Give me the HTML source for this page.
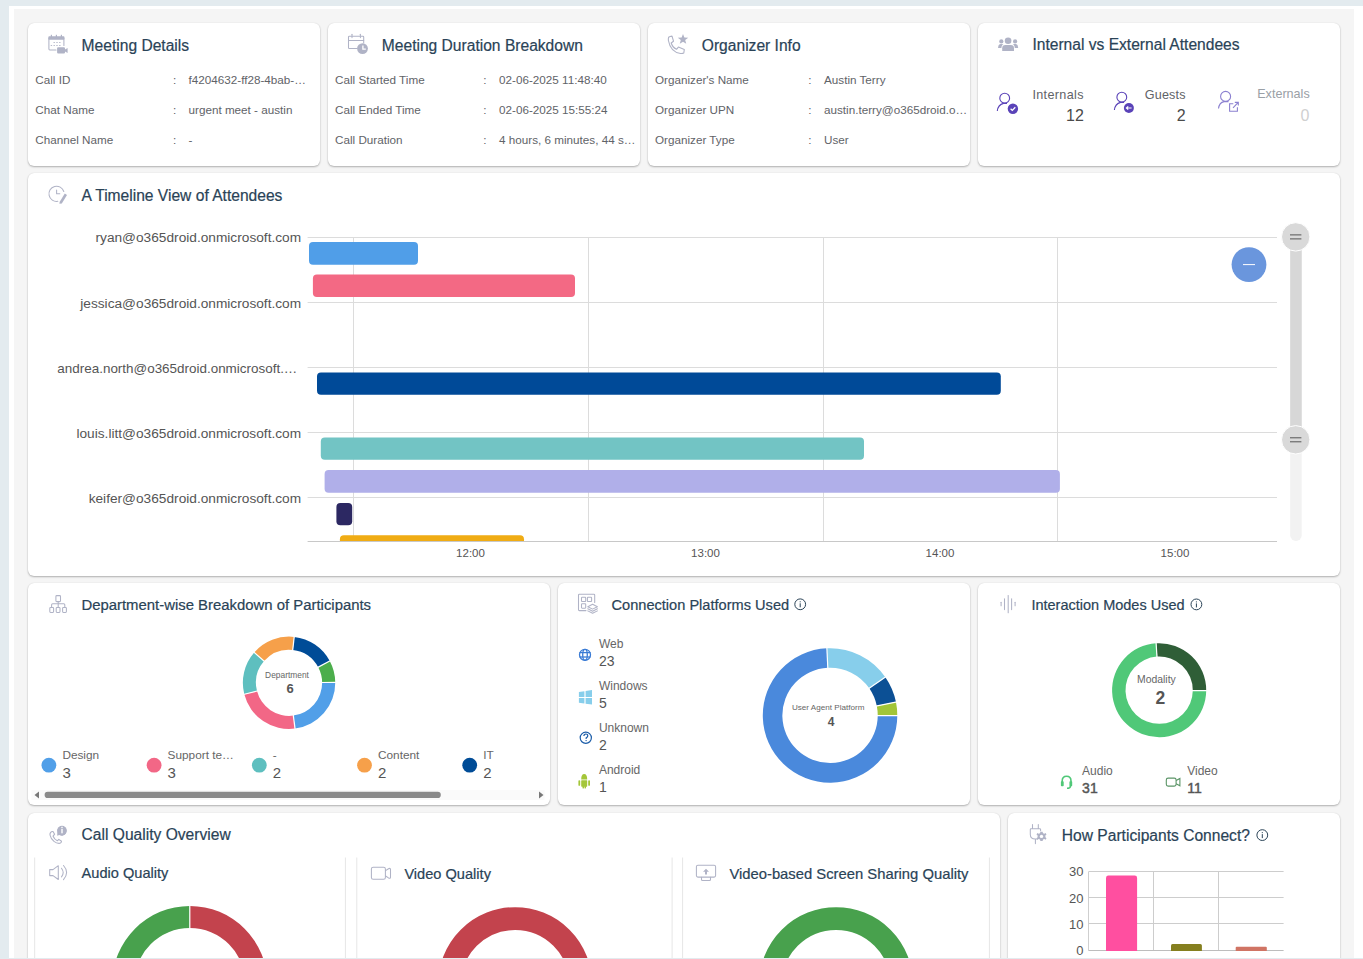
<!DOCTYPE html>
<html><head><meta charset="utf-8">
<style>
*{box-sizing:border-box;margin:0;padding:0}
html,body{width:1363px;height:959px;overflow:hidden;background:#e3ebef;font-family:"Liberation Sans",sans-serif}
#wrap{position:absolute;left:9px;top:6px;width:1354px;height:952px;background:#fff;overflow:hidden}
#gray{position:absolute;left:5px;top:3px;width:1340px;height:960px;background:#f5f5f5}
#clip{position:absolute;left:0;top:0;width:1363px;height:958px;overflow:hidden}
.card{position:absolute;background:#fff;border-radius:6px;box-shadow:0 1px 2px rgba(0,0,0,.28),0 0 1px rgba(0,0,0,.12)}
.a{position:absolute;white-space:nowrap;line-height:1}
.ic{position:absolute}
</style></head><body>
<div id="wrap"><div id="gray"></div></div>
<div id="clip">
<div class="card" style="left:27.5px;top:22.5px;width:292.5px;height:143.0px"></div>
<div class="card" style="left:327.5px;top:22.5px;width:312.5px;height:143.0px"></div>
<div class="card" style="left:647.5px;top:22.5px;width:322.5px;height:143.0px"></div>
<div class="card" style="left:977.5px;top:22.5px;width:362.5px;height:143.0px"></div>
<div class="card" style="left:27.5px;top:173px;width:1312.5px;height:402.5px"></div>
<div class="card" style="left:27.5px;top:583px;width:522.5px;height:222.20000000000005px"></div>
<div class="card" style="left:557.5px;top:583px;width:412.5px;height:222.20000000000005px"></div>
<div class="card" style="left:977.5px;top:583px;width:362.5px;height:222.20000000000005px"></div>
<div class="card" style="left:27.5px;top:812.5px;width:972.5px;height:199.5px"></div>
<div class="card" style="left:1007.5px;top:812.5px;width:332.5px;height:199.5px"></div>
<div class="a" style="top:37.69px;font-size:15.6px;color:#2a4357;left:81.60px;-webkit-text-stroke:0.2px #2a4357;">Meeting Details</div>
<div class="a" style="top:37.69px;font-size:15.6px;color:#2a4357;left:381.80px;-webkit-text-stroke:0.2px #2a4357;">Meeting Duration Breakdown</div>
<div class="a" style="top:37.69px;font-size:15.6px;color:#2a4357;left:701.80px;-webkit-text-stroke:0.2px #2a4357;">Organizer Info</div>
<div class="a" style="top:36.69px;font-size:15.6px;color:#2a4357;left:1032.40px;-webkit-text-stroke:0.2px #2a4357;">Internal vs External Attendees</div>
<div class="a" style="top:73.90px;font-size:11.7px;color:#5f6368;left:35.30px;">Call ID</div>
<div class="a" style="top:73.90px;font-size:11.7px;color:#5f6368;left:173.00px;">:</div>
<div class="a" style="top:73.90px;font-size:11.7px;color:#5f6368;left:188.50px;">f4204632-ff28-4bab-&#8230;</div>
<div class="a" style="top:103.90px;font-size:11.7px;color:#5f6368;left:35.30px;">Chat Name</div>
<div class="a" style="top:103.90px;font-size:11.7px;color:#5f6368;left:173.00px;">:</div>
<div class="a" style="top:103.90px;font-size:11.7px;color:#5f6368;left:188.50px;">urgent meet - austin</div>
<div class="a" style="top:133.90px;font-size:11.7px;color:#5f6368;left:35.30px;">Channel Name</div>
<div class="a" style="top:133.90px;font-size:11.7px;color:#5f6368;left:173.00px;">:</div>
<div class="a" style="top:133.90px;font-size:11.7px;color:#5f6368;left:188.50px;">-</div>
<div class="a" style="top:73.90px;font-size:11.7px;color:#5f6368;left:335.00px;">Call Started Time</div>
<div class="a" style="top:73.90px;font-size:11.7px;color:#5f6368;left:483.30px;">:</div>
<div class="a" style="top:73.90px;font-size:11.7px;color:#5f6368;left:499.00px;">02-06-2025 11:48:40</div>
<div class="a" style="top:103.90px;font-size:11.7px;color:#5f6368;left:335.00px;">Call Ended Time</div>
<div class="a" style="top:103.90px;font-size:11.7px;color:#5f6368;left:483.30px;">:</div>
<div class="a" style="top:103.90px;font-size:11.7px;color:#5f6368;left:499.00px;">02-06-2025 15:55:24</div>
<div class="a" style="top:133.90px;font-size:11.7px;color:#5f6368;left:335.00px;">Call Duration</div>
<div class="a" style="top:133.90px;font-size:11.7px;color:#5f6368;left:483.30px;">:</div>
<div class="a" style="top:133.90px;font-size:11.7px;color:#5f6368;left:499.00px;">4 hours, 6 minutes, 44 s&#8230;</div>
<div class="a" style="top:73.90px;font-size:11.7px;color:#5f6368;left:655.00px;">Organizer's Name</div>
<div class="a" style="top:73.90px;font-size:11.7px;color:#5f6368;left:808.30px;">:</div>
<div class="a" style="top:73.90px;font-size:11.7px;color:#5f6368;left:824.00px;">Austin Terry</div>
<div class="a" style="top:103.90px;font-size:11.7px;color:#5f6368;left:655.00px;">Organizer UPN</div>
<div class="a" style="top:103.90px;font-size:11.7px;color:#5f6368;left:808.30px;">:</div>
<div class="a" style="top:103.90px;font-size:11.7px;color:#5f6368;left:824.00px;">austin.terry@o365droid.o&#8230;</div>
<div class="a" style="top:133.90px;font-size:11.7px;color:#5f6368;left:655.00px;">Organizer Type</div>
<div class="a" style="top:133.90px;font-size:11.7px;color:#5f6368;left:808.30px;">:</div>
<div class="a" style="top:133.90px;font-size:11.7px;color:#5f6368;left:824.00px;">User</div>
<div class="a" style="top:89.13px;font-size:12.6px;color:#5f6368;letter-spacing:0.35px;left:1032.40px;">Internals</div>
<div class="a" style="top:108.26px;font-size:16px;color:#4a4a4a;left:483.90px;width:600px;text-align:right;">12</div>
<div class="a" style="top:88.63px;font-size:12.6px;color:#5f6368;letter-spacing:0.15px;left:1144.80px;">Guests</div>
<div class="a" style="top:107.76px;font-size:16px;color:#4a4a4a;left:585.60px;width:600px;text-align:right;">2</div>
<div class="a" style="top:87.93px;font-size:12.6px;color:#9aa0a6;left:1257.20px;">Externals</div>
<div class="a" style="top:108.26px;font-size:16px;color:#d0d0d0;left:709.50px;width:600px;text-align:right;">0</div>
<div class="a" style="top:188.29px;font-size:15.6px;color:#2a4357;left:81.60px;-webkit-text-stroke:0.2px #2a4357;">A Timeline View of Attendees</div>
<div class="a" style="top:231.10px;font-size:13.7px;color:#555;left:-298.90px;width:600px;text-align:right;">ryan@o365droid.onmicrosoft.com</div>
<div class="a" style="top:296.50px;font-size:13.7px;color:#555;left:-298.90px;width:600px;text-align:right;">jessica@o365droid.onmicrosoft.com</div>
<div class="a" style="top:362.21px;font-size:13.45px;color:#555;left:-302.70px;width:600px;text-align:right;">andrea.north@o365droid.onmicrosoft.&#8230;</div>
<div class="a" style="top:427.00px;font-size:13.7px;color:#555;left:-298.90px;width:600px;text-align:right;">louis.litt@o365droid.onmicrosoft.com</div>
<div class="a" style="top:492.20px;font-size:13.7px;color:#555;left:-298.90px;width:600px;text-align:right;">keifer@o365droid.onmicrosoft.com</div>
<svg class="ic" style="left:0;top:0" width="1363" height="959"><line x1="307.6" y1="237.5" x2="1277" y2="237.5" stroke="#dcdcdc" stroke-width="1"/><line x1="307.6" y1="302.5" x2="1277" y2="302.5" stroke="#dcdcdc" stroke-width="1"/><line x1="307.6" y1="367.5" x2="1277" y2="367.5" stroke="#dcdcdc" stroke-width="1"/><line x1="307.6" y1="432.5" x2="1277" y2="432.5" stroke="#dcdcdc" stroke-width="1"/><line x1="307.6" y1="497.5" x2="1277" y2="497.5" stroke="#dcdcdc" stroke-width="1"/><line x1="307.6" y1="541.5" x2="1277" y2="541.5" stroke="#c8c8c8" stroke-width="1"/><line x1="353.5" y1="237" x2="353.5" y2="541" stroke="#dcdcdc" stroke-width="1"/><line x1="588.5" y1="237" x2="588.5" y2="541" stroke="#dcdcdc" stroke-width="1"/><line x1="823.5" y1="237" x2="823.5" y2="541" stroke="#dcdcdc" stroke-width="1"/><line x1="1057.5" y1="237" x2="1057.5" y2="541" stroke="#dcdcdc" stroke-width="1"/><defs><clipPath id="tlc"><rect x="300" y="200" width="990" height="341"/></clipPath></defs><g clip-path="url(#tlc)"><rect x="309" y="241.9" width="109" height="22.900000000000006" rx="4" fill="#509ee8"/><rect x="312.9" y="274.5" width="262.1" height="22.600000000000023" rx="4" fill="#f36984"/><rect x="317" y="372.5" width="683.8" height="22.30000000000001" rx="4" fill="#004a98"/><rect x="320.8" y="437.5" width="543.2" height="22.30000000000001" rx="4" fill="#72c4c4"/><rect x="324.6" y="470.1" width="735.3000000000001" height="22.599999999999966" rx="4" fill="#b0afe9"/><rect x="336.4" y="503" width="15.800000000000011" height="22.299999999999955" rx="4" fill="#2c2862"/><rect x="339.9" y="535.3" width="184.10000000000002" height="22.700000000000045" rx="4" fill="#f0ac14"/></g><rect x="1290.2" y="237.6" width="11.5" height="303.3" rx="5.75" fill="#f2f2f2"/><rect x="1290.2" y="237.6" width="11.5" height="202.2" fill="#d7d7d7"/><circle cx="1295.7" cy="236.9" r="14.2" fill="#d9d9d9" stroke="#fff" stroke-width="1"/><line x1="1290" y1="234.9" x2="1301.4" y2="234.9" stroke="#555" stroke-width="1"/><line x1="1290" y1="238.9" x2="1301.4" y2="238.9" stroke="#555" stroke-width="1"/><circle cx="1295.7" cy="439.8" r="14.2" fill="#d9d9d9" stroke="#fff" stroke-width="1"/><line x1="1290" y1="437.8" x2="1301.4" y2="437.8" stroke="#555" stroke-width="1"/><line x1="1290" y1="441.8" x2="1301.4" y2="441.8" stroke="#555" stroke-width="1"/><circle cx="1249" cy="264.6" r="17.4" fill="#6a96dd"/><line x1="1243" y1="264.6" x2="1255" y2="264.6" stroke="#fff" stroke-width="1"/></svg>
<div class="a" style="top:547.77px;font-size:11.5px;color:#555;left:170.50px;width:600px;text-align:center;">12:00</div>
<div class="a" style="top:547.77px;font-size:11.5px;color:#555;left:405.50px;width:600px;text-align:center;">13:00</div>
<div class="a" style="top:547.77px;font-size:11.5px;color:#555;left:640.00px;width:600px;text-align:center;">14:00</div>
<div class="a" style="top:547.77px;font-size:11.5px;color:#555;left:875.00px;width:600px;text-align:center;">15:00</div>
<div class="a" style="top:598.09px;font-size:14.9px;color:#2a4357;left:81.40px;-webkit-text-stroke:0.2px #2a4357;">Department-wise Breakdown of Participants</div>
<div class="a" style="top:597.94px;font-size:14.6px;color:#2a4357;left:611.50px;-webkit-text-stroke:0.2px #2a4357;">Connection Platforms Used</div>
<div class="a" style="top:597.93px;font-size:14.5px;color:#2a4357;left:1031.40px;-webkit-text-stroke:0.2px #2a4357;">Interaction Modes Used</div>
<div class="a" style="top:671.09px;font-size:8.4px;color:#666;left:-13.00px;width:600px;text-align:center;">Department</div>
<div class="a" style="top:681.90px;font-size:13px;color:#555;font-weight:700;left:-10.00px;width:600px;text-align:center;">6</div>
<div class="a" style="top:750.41px;font-size:11.8px;color:#666;left:62.40px;">Design</div>
<div class="a" style="top:765.20px;font-size:15px;color:#555;left:62.40px;">3</div>
<div class="a" style="top:750.41px;font-size:11.8px;color:#666;left:167.60px;">Support te&#8230;</div>
<div class="a" style="top:765.20px;font-size:15px;color:#555;left:167.60px;">3</div>
<div class="a" style="top:750.41px;font-size:11.8px;color:#666;left:272.80px;">-</div>
<div class="a" style="top:765.20px;font-size:15px;color:#555;left:272.80px;">2</div>
<div class="a" style="top:750.41px;font-size:11.8px;color:#666;left:378.00px;">Content</div>
<div class="a" style="top:765.20px;font-size:15px;color:#555;left:378.00px;">2</div>
<div class="a" style="top:750.41px;font-size:11.8px;color:#666;left:483.20px;">IT</div>
<div class="a" style="top:765.20px;font-size:15px;color:#555;left:483.20px;">2</div>
<div class="a" style="top:704.34px;font-size:8.1px;color:#666;left:528.20px;width:600px;text-align:center;">User Agent Platform</div>
<div class="a" style="top:715.84px;font-size:12px;color:#555;font-weight:700;left:531.20px;width:600px;text-align:center;">4</div>
<div class="a" style="top:638.04px;font-size:12px;color:#666;left:598.90px;">Web</div>
<div class="a" style="top:654.05px;font-size:14px;color:#555;left:598.90px;">23</div>
<div class="a" style="top:680.04px;font-size:12px;color:#666;left:598.90px;">Windows</div>
<div class="a" style="top:696.05px;font-size:14px;color:#555;left:598.90px;">5</div>
<div class="a" style="top:722.04px;font-size:12px;color:#666;left:598.90px;">Unknown</div>
<div class="a" style="top:738.05px;font-size:14px;color:#555;left:598.90px;">2</div>
<div class="a" style="top:764.04px;font-size:12px;color:#666;left:598.90px;">Android</div>
<div class="a" style="top:780.05px;font-size:14px;color:#555;left:598.90px;">1</div>
<div class="a" style="top:674.95px;font-size:10.4px;color:#666;left:856.40px;width:600px;text-align:center;">Modality</div>
<div class="a" style="top:689.89px;font-size:17.5px;color:#555;font-weight:700;left:860.40px;width:600px;text-align:center;">2</div>
<div class="a" style="top:765.04px;font-size:12px;color:#666;left:1082.10px;">Audio</div>
<div class="a" style="top:780.95px;font-size:14px;color:#555;left:1082.10px;-webkit-text-stroke:0.45px #555;">31</div>
<div class="a" style="top:765.04px;font-size:12px;color:#666;left:1187.20px;">Video</div>
<div class="a" style="top:780.95px;font-size:14px;color:#555;left:1187.20px;-webkit-text-stroke:0.45px #555;">11</div>
<div class="a" style="top:827.39px;font-size:15.6px;color:#2a4357;left:81.60px;-webkit-text-stroke:0.2px #2a4357;">Call Quality Overview</div>
<div class="a" style="top:827.79px;font-size:15.6px;color:#2a4357;left:1061.80px;-webkit-text-stroke:0.2px #2a4357;">How Participants Connect?</div>
<div class="a" style="top:866.04px;font-size:14.6px;color:#2a4357;left:81.60px;-webkit-text-stroke:0.2px #2a4357;">Audio Quality</div>
<div class="a" style="top:867.14px;font-size:14.6px;color:#2a4357;left:404.40px;-webkit-text-stroke:0.2px #2a4357;">Video Quality</div>
<div class="a" style="top:867.27px;font-size:14.8px;color:#2a4357;left:729.40px;-webkit-text-stroke:0.2px #2a4357;">Video-based Screen Sharing Quality</div>
<div class="a" style="top:865.20px;font-size:13px;color:#555;left:483.40px;width:600px;text-align:right;">30</div>
<div class="a" style="top:891.80px;font-size:13px;color:#555;left:483.40px;width:600px;text-align:right;">20</div>
<div class="a" style="top:917.60px;font-size:13px;color:#555;left:483.40px;width:600px;text-align:right;">10</div>
<div class="a" style="top:943.70px;font-size:13px;color:#555;left:483.40px;width:600px;text-align:right;">0</div>
<svg class="ic" style="left:0;top:0" width="1363" height="959"><path d="M294.20,636.89 A46.2,46.2 0 0 1 329.76,660.96 L318.22,667.15 A33.1,33.1 0 0 0 292.74,649.91 Z" fill="#004c97"/><path d="M329.76,660.96 A46.2,46.2 0 0 1 335.25,682.38 L322.15,682.50 A33.1,33.1 0 0 0 318.22,667.15 Z" fill="#4cae4c"/><path d="M335.25,682.38 A46.2,46.2 0 0 1 295.04,728.61 L293.34,715.62 A33.1,33.1 0 0 0 322.15,682.50 Z" fill="#519fe8"/><path d="M295.04,728.61 A46.2,46.2 0 0 1 244.30,694.27 L256.99,691.01 A33.1,33.1 0 0 0 293.34,715.62 Z" fill="#f26786"/><path d="M244.30,694.27 A46.2,46.2 0 0 1 254.19,652.48 L264.07,661.08 A33.1,33.1 0 0 0 256.99,691.01 Z" fill="#5ebfbf"/><path d="M254.19,652.48 A46.2,46.2 0 0 1 294.20,636.89 L292.74,649.91 A33.1,33.1 0 0 0 264.07,661.08 Z" fill="#f6a04a"/><line x1="292.63" y1="650.90" x2="294.31" y2="635.89" stroke="#fff" stroke-width="1.2"/><line x1="317.34" y1="667.62" x2="330.64" y2="660.48" stroke="#fff" stroke-width="1.2"/><line x1="321.15" y1="682.51" x2="336.25" y2="682.37" stroke="#fff" stroke-width="1.2"/><line x1="293.21" y1="714.63" x2="295.17" y2="729.60" stroke="#fff" stroke-width="1.2"/><line x1="257.95" y1="690.77" x2="243.33" y2="694.51" stroke="#fff" stroke-width="1.2"/><line x1="264.83" y1="661.73" x2="253.44" y2="651.82" stroke="#fff" stroke-width="1.2"/><circle cx="48.90" cy="765.2" r="7.4" fill="#519fe8"/><circle cx="154.10" cy="765.2" r="7.4" fill="#f26786"/><circle cx="259.30" cy="765.2" r="7.4" fill="#5ebfbf"/><circle cx="364.50" cy="765.2" r="7.4" fill="#f6a04a"/><circle cx="469.70" cy="765.2" r="7.4" fill="#004c97"/><rect x="31.5" y="790" width="513" height="10" fill="#fafafa"/><rect x="44.6" y="791.8" width="396.2" height="6.2" rx="3.1" fill="#8a8a8a"/><path d="M34.5,795 L39,791.5 L39,798.5 Z" fill="#777"/><path d="M543.5,795 L539,791.5 L539,798.5 Z" fill="#777"/><path d="M826.88,648.22 A67.25,67.25 0 0 1 885.38,677.18 L869.30,688.29 A47.7,47.7 0 0 0 827.80,667.75 Z" fill="#87ceeb"/><path d="M885.38,677.18 A67.25,67.25 0 0 1 895.97,702.10 L876.81,705.96 A47.7,47.7 0 0 0 869.30,688.29 Z" fill="#0c5095"/><path d="M895.97,702.10 A67.25,67.25 0 0 1 897.30,715.64 L877.75,715.57 A47.7,47.7 0 0 0 876.81,705.96 Z" fill="#a2c538"/><path d="M897.30,715.64 A67.25,67.25 0 1 1 826.88,648.22 L827.80,667.75 A47.7,47.7 0 1 0 877.75,715.57 Z" fill="#4a89dc"/><line x1="827.85" y1="668.75" x2="826.83" y2="647.23" stroke="#fff" stroke-width="1.2"/><line x1="868.47" y1="688.86" x2="886.21" y2="676.61" stroke="#fff" stroke-width="1.2"/><line x1="875.83" y1="706.16" x2="896.95" y2="701.90" stroke="#fff" stroke-width="1.2"/><line x1="876.75" y1="715.57" x2="898.30" y2="715.64" stroke="#fff" stroke-width="1.2"/><g fill="none" stroke="#3a7bd5" stroke-width="1.3"><circle cx="585" cy="654.8" r="5.5"/><line x1="579.5" y1="652.6" x2="590.5" y2="652.6"/><line x1="579.5" y1="657" x2="590.5" y2="657"/><ellipse cx="585" cy="654.8" rx="2.3" ry="5.5"/></g><g fill="#87ceeb"><path d="M578.9,692 L584.4,691.2 L584.4,697 L578.9,697 Z"/><path d="M585.6,691 L592,690 L592,697 L585.6,697 Z"/><path d="M578.9,698 L584.4,698 L584.4,703.6 L578.9,702.8 Z"/><path d="M585.6,698 L592,698 L592,704.6 L585.6,703.7 Z"/></g><circle cx="585.8" cy="737.8" r="5.6" fill="none" stroke="#1a5ca8" stroke-width="1.2"/><path d="M583.9,736.1 Q583.9,734 585.9,734 Q587.8,734 587.8,735.8 Q587.8,737 586.3,737.7 L586.1,739" fill="none" stroke="#1a5ca8" stroke-width="1.2"/><circle cx="586.1" cy="740.6" r="0.7" fill="#1a5ca8"/><g fill="#a4c639"><path d="M581.2,779.5 Q581.2,774 584.2,774 Q587.2,774 587.2,779.5 Z"/><rect x="581.2" y="780.2" width="6" height="6.5" rx="0.6"/><rect x="578.4" y="780.2" width="1.8" height="5.6" rx="0.9"/><rect x="588.2" y="780.2" width="1.8" height="5.6" rx="0.9"/><rect x="582.5" y="786" width="1.5" height="2.4"/><rect x="584.5" y="786" width="1.5" height="2.4"/></g><path d="M1156.11,643.25 A47.05,47.05 0 0 1 1206.20,690.68 L1192.80,690.54 A33.65,33.65 0 0 0 1156.98,656.62 Z" fill="#2f5e37"/><path d="M1206.20,690.68 A47.05,47.05 0 1 1 1156.11,643.25 L1156.98,656.62 A33.65,33.65 0 1 0 1192.80,690.54 Z" fill="#50c878"/><line x1="1157.04" y1="657.62" x2="1156.05" y2="642.25" stroke="#fff" stroke-width="1.2"/><line x1="1191.80" y1="690.53" x2="1207.20" y2="690.69" stroke="#fff" stroke-width="1.2"/><g fill="none" stroke="#50c878" stroke-width="1.6"><path d="M1062.2,784 L1062.2,781 Q1062.2,776.3 1066.6,776.3 Q1071,776.3 1071,781 L1071,784"/><path d="M1070.5,786 Q1070.5,788.3 1067,788.3"/></g><g fill="#50c878"><rect x="1060.9" y="781.3" width="2.8" height="5" rx="0.8"/><rect x="1069.4" y="781.3" width="2.8" height="5" rx="0.8"/></g><g fill="none" stroke="#5a9466" stroke-width="1.1"><rect x="1166.3" y="778.1" width="9.8" height="8" rx="1.8"/><path d="M1176.1,780.5 L1179.9,778.5 L1179.9,785.8 L1176.1,783.7"/></g><line x1="34.7" y1="857.5" x2="34.7" y2="960" stroke="#e6e6e6" stroke-width="1"/><line x1="345.4" y1="857.5" x2="345.4" y2="960" stroke="#e6e6e6" stroke-width="1"/><line x1="356.8" y1="857.5" x2="356.8" y2="960" stroke="#e6e6e6" stroke-width="1"/><line x1="672.1" y1="857.5" x2="672.1" y2="960" stroke="#e6e6e6" stroke-width="1"/><line x1="682.6" y1="857.5" x2="682.6" y2="960" stroke="#e6e6e6" stroke-width="1"/><line x1="989.4" y1="857.5" x2="989.4" y2="960" stroke="#e6e6e6" stroke-width="1"/><path d="M189.80,905.90 A77.6,77.6 0 0 1 189.80,1061.10 L189.80,1038.90 A55.4,55.4 0 0 0 189.80,928.10 Z" fill="#c3434d"/><path d="M189.80,1061.10 A77.6,77.6 0 0 1 189.80,905.90 L189.80,928.10 A55.4,55.4 0 0 0 189.80,1038.90 Z" fill="#48a14d"/><line x1="189.80" y1="929.10" x2="189.80" y2="904.90" stroke="#fff" stroke-width="1.2"/><line x1="189.80" y1="1037.90" x2="189.80" y2="1062.10" stroke="#fff" stroke-width="1.2"/><circle cx="515.1" cy="984.1" r="65.5" fill="none" stroke="#c3434d" stroke-width="22.8"/><circle cx="836.1" cy="984.1" r="65.55" fill="none" stroke="#48a14d" stroke-width="22.7"/><line x1="1088.7" y1="871.5" x2="1283.6" y2="871.5" stroke="#cdcdcd" stroke-width="1"/><line x1="1088.7" y1="897.5" x2="1283.6" y2="897.5" stroke="#cdcdcd" stroke-width="1"/><line x1="1088.7" y1="923.5" x2="1283.6" y2="923.5" stroke="#cdcdcd" stroke-width="1"/><line x1="1153.5" y1="871.5" x2="1153.5" y2="950" stroke="#cdcdcd" stroke-width="1"/><line x1="1218.5" y1="871.5" x2="1218.5" y2="950" stroke="#cdcdcd" stroke-width="1"/><line x1="1088.5" y1="871.5" x2="1088.5" y2="950.5" stroke="#cfcfcf" stroke-width="1"/><line x1="1088.5" y1="950.5" x2="1283.6" y2="950.5" stroke="#bdbdbd" stroke-width="1"/><path d="M1106,951 L1106,878 Q1106,875.6 1108.4,875.6 L1134.7,875.6 Q1137.1,875.6 1137.1,878 L1137.1,951 Z" fill="#ff4fa0"/><path d="M1171,951 L1171,945.5 Q1171,944 1172.5,944 L1200.4,944 Q1201.9,944 1201.9,945.5 L1201.9,951 Z" fill="#857f1f"/><path d="M1235.7,951 L1235.7,947.7 Q1235.7,946.7 1236.7,946.7 L1265.8,946.7 Q1266.8,946.7 1266.8,947.7 L1266.8,951 Z" fill="#d07464"/><g fill="#b0b3c6"><rect x="48.4" y="36.3" width="16" height="3.4" rx="0.8"/><rect x="50.8" y="34.8" width="1.2" height="2.6"/><rect x="55.8" y="34.8" width="1.2" height="2.6"/><rect x="60.8" y="34.8" width="1.2" height="2.6"/><path d="M57.1,48.3 Q57.1,47.2 58.2,47.2 L63.9,47.2 Q65,47.2 65,48.3 L65,49.4 L67.6,47.9 L67.6,52.9 L65,51.4 L65,52.5 Q65,53.6 63.9,53.6 L58.2,53.6 Q57.1,53.6 57.1,52.5 Z"/><rect x="53.5" y="42.1" width="1.4" height="0.9"/><rect x="56.3" y="42.1" width="1.4" height="0.9"/><rect x="59.1" y="42.1" width="1.4" height="0.9"/><rect x="50.7" y="45" width="1.4" height="0.9"/><rect x="53.5" y="45" width="1.4" height="0.9"/><rect x="56.3" y="45" width="1.4" height="0.9"/><rect x="59.1" y="45" width="1.4" height="0.9"/></g><g fill="none" stroke="#b0b3c6" stroke-width="1.05" stroke-linecap="round" stroke-linejoin="round"><path d="M48.9,38 L48.9,49.1 Q48.9,50 49.8,50 L56,50"/><path d="M63.9,38 L63.9,45.5"/></g><g fill="none" stroke="#b0b3c6" stroke-width="1.05" stroke-linecap="round" stroke-linejoin="round"><path d="M357,48.5 L349.3,48.5 Q348.5,48.5 348.5,47.7 L348.5,37 Q348.5,36.2 349.3,36.2 L362.9,36.2 Q363.7,36.2 363.7,37 L363.7,43"/><line x1="348.5" y1="40.4" x2="363.7" y2="40.4"/><line x1="352" y1="34.2" x2="352" y2="37.6"/><line x1="360.4" y1="34.2" x2="360.4" y2="37.6"/></g><circle cx="362.5" cy="48.6" r="5.4" fill="#b0b3c6"/><path d="M362.9,45.4 L362.9,49.2 L365.8,49.2" fill="none" stroke="#fff" stroke-width="1.3"/><g fill="none" stroke="#b0b3c6" stroke-width="1.05" stroke-linecap="round" stroke-linejoin="round"><path d="M668.6,37.3 Q670,36.2 672,36.1 L673.5,41.2 L671.2,43 Q672.4,47.2 676.5,49.3 L678.4,47.1 L684.3,49.5 L683.8,53 Q682.4,53.7 680.5,53.5 Q670.5,52 668.4,40.5 Q668.2,38.5 668.6,37.3 Z" stroke-width="1.1"/></g><path d="M683.00,33.90 L684.35,37.54 L688.23,37.70 L685.19,40.11 L686.23,43.85 L683.00,41.70 L679.77,43.85 L680.81,40.11 L677.77,37.70 L681.65,37.54 Z" fill="#b0b3c6"/><g fill="#b0b3c6"><circle cx="1008.1" cy="40.8" r="3.3"/><path d="M1002.2,51 L1002.2,48.3 Q1002.2,45 1005.5,45 L1010.8,45 Q1014,45 1014,48.3 L1014,51 Z"/><circle cx="1001.3" cy="41.4" r="2.1"/><path d="M998,47.9 L998.5,45.5 Q999,44 1000.5,44 L1003.3,44 L1002.5,44.8 Q1001.4,46 1001.4,47.9 Z"/><circle cx="1015.1" cy="41.4" r="2.1"/><path d="M1018.2,47.9 L1017.7,45.5 Q1017.2,44 1015.7,44 L1012.9,44 L1013.7,44.8 Q1014.8,46 1014.8,47.9 Z"/></g><g fill="none" stroke="#5a43b8" stroke-width="1.1"><circle cx="1004.7" cy="98.2" r="4.9"/><path d="M997.3,111 Q998,104.8 1003.5,103.4 L1007,103.4"/></g><circle cx="1012.9" cy="108.7" r="5.2" fill="#5a43b8"/><path d="M1010.6,108.8 L1012.3,110.4 L1015.3,107.2" fill="none" stroke="#fff" stroke-width="1.3"/><g fill="none" stroke="#5a43b8" stroke-width="1.1"><circle cx="1121.8" cy="97.2" r="4.9"/><path d="M1114.4,110 Q1115.1,103.8 1120.6,102.4 L1124.1,102.4"/></g><circle cx="1128.9" cy="108" r="5" fill="#5a43b8"/><path d="M1131.6,108 L1126.6,108 M1128.2,106.4 L1126.4,108 L1128.2,109.6" fill="none" stroke="#fff" stroke-width="1.2"/><g fill="none" stroke="#8b80d0" stroke-width="1.1"><circle cx="1225.6" cy="96.4" r="5"/><path d="M1218.5,108.5 Q1219.3,102.5 1224,101.6 L1228.5,101.6"/><path d="M1233.3,103.8 L1229.6,103.8 L1229.6,111.3 L1237.4,111.3 L1237.4,107.2"/><path d="M1233,107.8 L1238,102.6 M1234.8,102.4 L1238.3,102.4 L1238.3,105.5"/></g><g fill="none" stroke="#b0b3c6" stroke-width="1.05" stroke-linecap="round" stroke-linejoin="round"><path d="M63.8,191.5 A7.6,7.6 0 1 0 57.8,201.3"/><path d="M56.6,190 L56.6,193.7 L59.8,193.7"/></g><path d="M59.6,202 L64.8,193.6 L67,195 L61.8,203.4 L59.4,203.8 Z" fill="#b0b3c6"/><g fill="none" stroke="#b0b3c6" stroke-width="1.05" stroke-linecap="round" stroke-linejoin="round"><rect x="55.9" y="595.6" width="4.6" height="6" rx="0.8"/><path d="M58.2,601.6 L58.2,607 M51.6,607 L51.6,604.8 Q51.6,603.8 52.6,603.8 L63.8,603.8 Q64.8,603.8 64.8,604.8 L64.8,607"/><rect x="49.8" y="607.4" width="3.8" height="5" rx="0.8"/><rect x="56.2" y="607.4" width="3.8" height="5" rx="0.8"/><rect x="62.6" y="607.4" width="3.8" height="5" rx="0.8"/></g><g fill="none" stroke="#b0b3c6" stroke-width="1.05" stroke-linecap="round" stroke-linejoin="round"><path d="M586,610.6 L579.4,610.6 Q578.5,610.6 578.5,609.7 L578.5,595 Q578.5,594.2 579.4,594.2 L593.8,594.2 Q594.7,594.2 594.7,595 L594.7,602.5"/><rect x="581.5" y="597.3" width="4.2" height="4.2" rx="0.6"/><rect x="587.4" y="597.3" width="4.2" height="4.2" rx="0.6"/><rect x="581.5" y="603.7" width="4.2" height="4.5" rx="0.6"/><path d="M592.6,604.3 L597.4,606.7 L592.6,609.1 L587.8,606.7 Z"/><path d="M587.8,608.8 L592.6,611.2 L597.4,608.8 M587.8,610.9 L592.6,613.3 L597.4,610.9"/></g><g fill="none" stroke="#b0b3c6" stroke-width="1.05" stroke-linecap="round" stroke-linejoin="round"><line x1="1001.1" y1="602.3" x2="1001.1" y2="605.7"/><line x1="1004.5" y1="598.8" x2="1004.5" y2="609.6"/><line x1="1008.2" y1="595.5" x2="1008.2" y2="612.8"/><line x1="1011.6" y1="598.8" x2="1011.6" y2="609.6"/><line x1="1015.1" y1="602.3" x2="1015.1" y2="605.7"/></g><g fill="none" stroke="#b0b3c6" stroke-width="1.05" stroke-linecap="round" stroke-linejoin="round"><path d="M50.5,832.6 Q51.5,831.3 53,831.5 L54.6,834.2 L53.1,836.2 Q54.5,839.5 57.3,840.8 L58.8,839.4 L61.5,841.2 Q61.5,842.7 60,843.3 Q57,843.8 54,841.4 Q50.7,838.6 50,835 Q49.8,833.6 50.5,832.6 Z" stroke-width="1.1"/></g><path d="M57.2,835.8 L57.4,829.4 A4.7,4.7 0 1 1 59.3,835 Z" fill="#b0b3c6"/><circle cx="62" cy="830.6" r="4.8" fill="#b0b3c6"/><rect x="61.3" y="828.8" width="1.4" height="4.5" fill="#fff"/><rect x="61.3" y="826.8" width="1.4" height="1.2" fill="#fff"/><g fill="none" stroke="#b0b3c6" stroke-width="1.05" stroke-linecap="round" stroke-linejoin="round"><path d="M1032.5,824.4 L1032.5,828.8 M1038.3,824.4 L1038.3,828.8 M1040.6,830.8 L1040.6,829.6 Q1040.6,828.8 1039.8,828.8 L1031,828.8 Q1030.3,828.8 1030.3,829.6 L1030.3,834.5 Q1030.3,838.8 1035.4,839 L1035.4,843.6 M1035.4,839 L1037.5,839"/></g><g transform="translate(1041.5,836.4)"><path d="M-1.1,-4.6 L1.1,-4.6 L1.5,-3.2 L2.9,-2.6 L4.1,-3.4 L5,-1.8 L3.9,-0.8 L3.9,0.8 L5,1.8 L4.1,3.4 L2.9,2.6 L1.5,3.2 L1.1,4.6 L-1.1,4.6 L-1.5,3.2 L-2.9,2.6 L-4.1,3.4 L-5,1.8 L-3.9,0.8 L-3.9,-0.8 L-5,-1.8 L-4.1,-3.4 L-2.9,-2.6 L-1.5,-3.2 Z" fill="#b0b3c6"/><circle r="1.7" fill="#fff"/></g><g fill="none" stroke="#b0b3c6" stroke-width="1.05" stroke-linecap="round" stroke-linejoin="round"><path d="M49.7,869.6 L53,869.6 L58.3,865.7 L58.3,879.5 L53,875.6 L49.7,875.6 Z"/><path d="M61.5,868.2 Q63.2,870.5 63.2,872.6 Q63.2,874.7 61.5,876.9"/><path d="M63.5,865.5 Q66.6,868.8 66.6,872.6 Q66.6,876.3 63.5,879.6"/></g><g fill="none" stroke="#b0b3c6" stroke-width="1.05" stroke-linecap="round" stroke-linejoin="round"><rect x="371.4" y="867.3" width="14" height="12" rx="1.8"/><path d="M385.6,870.6 L388.5,868.7 Q390.5,867.8 390.5,869.5 L390.5,877.2 Q390.5,878.8 388.5,877.9 L385.6,876"/></g><g fill="none" stroke="#b0b3c6" stroke-width="1.05" stroke-linecap="round" stroke-linejoin="round"><rect x="696.4" y="865.2" width="19.2" height="11.9" rx="1.5"/><path d="M701.5,877.3 L701.5,879.4 Q701.5,880.4 702.5,880.4 L709.5,880.4 Q710.5,880.4 710.5,879.4 L710.5,877.3"/></g><path d="M706,868.8 L709,871.8 L707,871.8 L707,874.6 L705,874.6 L705,871.8 L703,871.8 Z" fill="#b0b3c6"/><circle cx="800.2" cy="604.3" r="5.4" fill="none" stroke="#2a4357" stroke-width="1"/><rect x="799.7" y="603.3" width="1" height="4" fill="#2a4357"/><rect x="799.7" y="601.3" width="1" height="1" fill="#2a4357"/><circle cx="1196.4" cy="604.4" r="5.4" fill="none" stroke="#2a4357" stroke-width="1"/><rect x="1195.9" y="603.4" width="1" height="4" fill="#2a4357"/><rect x="1195.9" y="601.4" width="1" height="1" fill="#2a4357"/><circle cx="1262.3" cy="835.1" r="5.4" fill="none" stroke="#2a4357" stroke-width="1"/><rect x="1261.8" y="834.1" width="1" height="4" fill="#2a4357"/><rect x="1261.8" y="832.1" width="1" height="1" fill="#2a4357"/></svg></div>
</body></html>
